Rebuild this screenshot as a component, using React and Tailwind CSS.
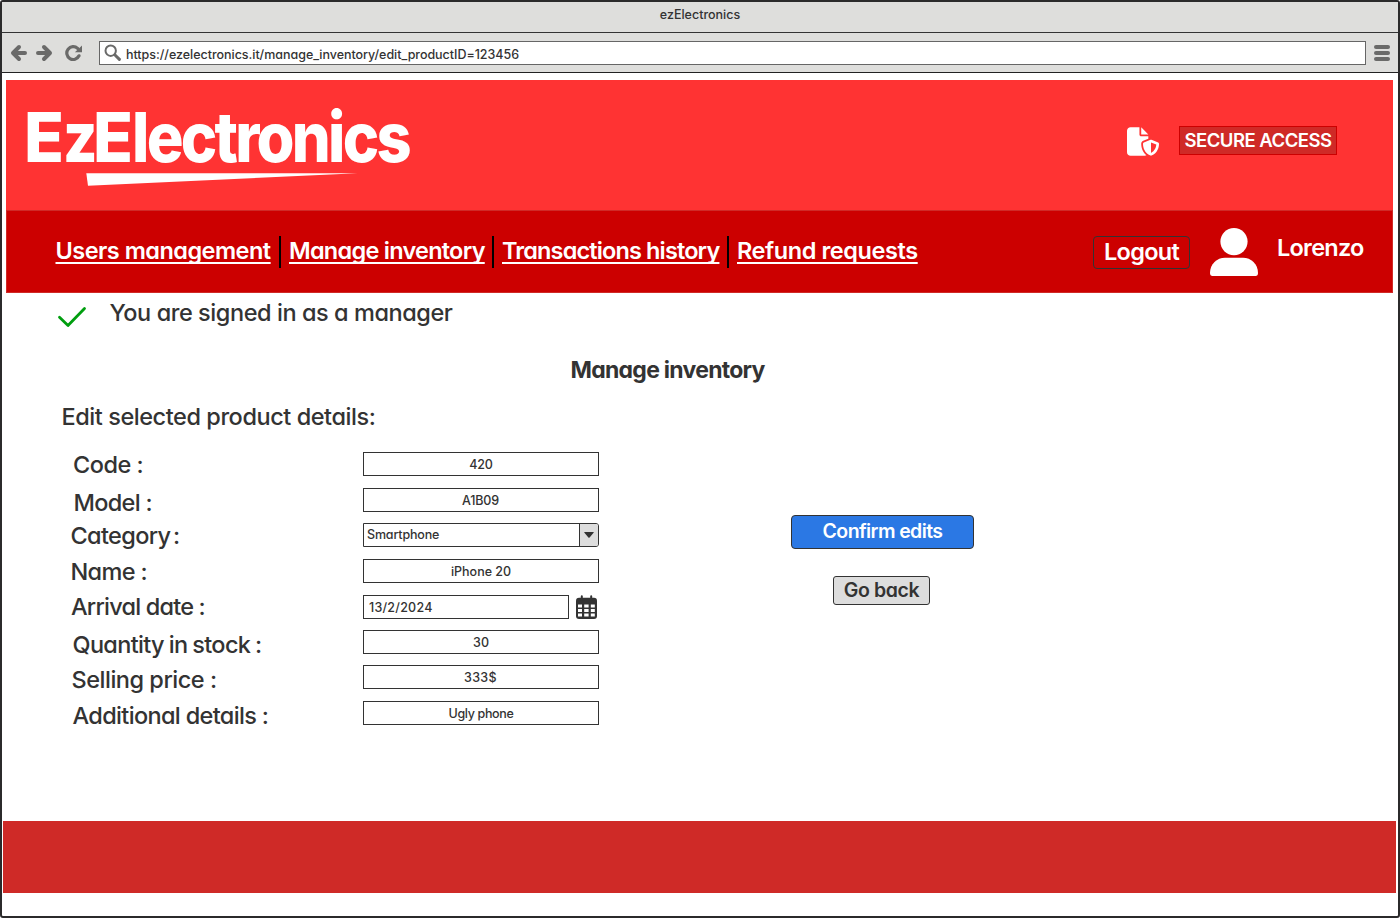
import { FaFileShield } from 'react-icons/fa6';

const INPUT = 'flex h-6 items-center justify-center border border-[#333333] bg-white pt-[2.5px] text-[12.5px] font-medium leading-none';

const navLinks = [
  { label: 'Users management', className: 'w-[215.5px] tracking-[-0.52px]' },
  { label: 'Manage inventory', className: 'w-[195px] tracking-[-0.74px]' },
  { label: 'Transactions history', className: 'w-[217px] tracking-[-0.86px]' },
  { label: 'Refund requests', className: 'w-[181px] tracking-[-0.42px]' },
];

function BrowserBar() {
  return (
    <div className="bg-[#dededc]">
      <div className="flex h-[31px] items-center justify-center border-b border-[#333333] pb-[4px] text-[12.5px] font-medium leading-none">
        ezElectronics
      </div>
      <div className="flex h-10 items-center border-b border-[#222222] pl-[7px] pr-[8px] pt-px">
        <svg className="h-[18px] w-[18px]" viewBox="0 0 18 18" fill="none" stroke="#6a6a69" strokeWidth="4" strokeLinecap="round" strokeLinejoin="round">
          <path d="M10 3 L4 9 L10 15 M4.7 9 H16" />
        </svg>
        <svg className="ml-[9px] h-[18px] w-[18px]" viewBox="0 0 18 18" fill="none" stroke="#6a6a69" strokeWidth="4" strokeLinecap="round" strokeLinejoin="round">
          <path d="M8 3 L14 9 L8 15 M13.3 9 H2" />
        </svg>
        <svg className="ml-[11px] h-[18px] w-[18px]" viewBox="0 0 18 18">
          <path d="M14 11.8 A6.4 6.4 0 1 1 12.6 4.4" fill="none" stroke="#6a6a69" strokeWidth="3.2" strokeLinecap="round" />
          <path d="M17 1.5 V8.3 H9.9 Z" fill="#6a6a69" />
        </svg>
        <div className="ml-4 flex h-6 flex-1 items-center border border-[#666666] bg-white pl-1">
          <svg className="h-[18px] w-[18px]" viewBox="0 0 18 18" fill="none" stroke="#6a6a69" strokeLinecap="round">
            <circle cx="6.7" cy="6.7" r="5.2" strokeWidth="2" />
            <path d="M11 11 L15.4 15.4" strokeWidth="3" />
          </svg>
          <span className="ml-1 pt-[4px] text-[12.5px] font-medium leading-none tracking-[-0.03px]">
            https://ezelectronics.it/manage_inventory/edit_productID=123456
          </span>
        </div>
        <div className="ml-2 flex w-4 flex-col gap-[2px]">
          <div className="h-1 rounded-full bg-[#6a6a69]" />
          <div className="h-1 rounded-full bg-[#6a6a69]" />
          <div className="h-1 rounded-full bg-[#6a6a69]" />
        </div>
      </div>
    </div>
  );
}

function Logo() {
  return (
    <div className="w-[400px] pl-[18px] pt-[21px] text-white">
      <div className="flex h-[72px] text-[69px] font-extrabold leading-[72px]">
        <span className="w-[38.5px] origin-left scale-x-[0.95] tracking-[-3px]">E</span>
        <span className="w-[30.5px] origin-left scale-x-[0.86] tracking-[-5px]">z</span>
        <span className="w-[38.5px] origin-left scale-x-[0.95] tracking-[-3px]">E</span>
        <span className="origin-left scale-x-[0.89] tracking-[-3.1px]">lectronics</span>
      </div>
      <svg className="ml-[61.5px] h-[13px] w-[273px]" viewBox="0 0 273 13">
        <path d="M0.3 0.3 L271.5 0.3 L2 12.7 Z" fill="#ffffff" />
      </svg>
    </div>
  );
}

function Header() {
  return (
    <header className="mx-1 mt-[7px] w-[1387px]">
      <div className="flex h-[130px] bg-[#ff3333]">
        <Logo />
        <div className="ml-auto mr-14 mt-[46px] flex h-[29px] items-center text-white">
          <FaFileShield className="mt-[2px] h-[29px] w-[32px]" />
          <button className="ml-5 flex h-[29px] w-[158px] items-center justify-center border border-[#cc0000] bg-[#cf2a27] text-[18.5px] font-semibold leading-none tracking-[-0.5px] whitespace-nowrap">
            SECURE ACCESS
          </button>
        </div>
      </div>
      <div className="flex h-[83px] border border-[#cf2a27] bg-[#cc0000] text-[23.5px] font-semibold leading-8 text-white">
        <nav className="mt-[23.5px] flex h-8 items-start pl-[48.5px]">
          {navLinks.map((link, i) => (
            <div key={link.label} className="flex">
              {i > 0 && <span className="ml-2 mr-2 mt-px h-8 w-[2px] bg-black" />}
              <a className={`block whitespace-nowrap underline decoration-[1.6px] underline-offset-[3px] [text-decoration-skip-ink:none] ${link.className}`}>
                {link.label}
              </a>
            </div>
          ))}
        </nav>
        <button className="ml-auto mt-[25px] flex h-[33px] w-[97px] items-center justify-center rounded-[4px] border border-[#333333] pb-[2px] tracking-[-0.7px]">
          Logout
        </button>
        <svg className="ml-5 mt-[17px] h-12 w-12" viewBox="0 0 48 48" fill="#ffffff">
          <circle cx="24" cy="13.6" r="13.6" />
          <path d="M0 45 C0 36 7 29.8 15 29.8 H33 C41 29.8 48 36 48 45 Q48 48 45.5 48 H2.5 Q0 48 0 45 Z" />
        </svg>
        <span className="ml-[19px] mr-[27px] mt-[21px] w-[88px] tracking-[-0.75px]">Lorenzo</span>
      </div>
    </header>
  );
}

function Labels() {
  return (
    <div className="w-[290px] pt-[2px] text-[23.5px] font-medium leading-8 whitespace-nowrap">
      <div className="pl-[2.5px] tracking-[-0.5px]">Code :</div>
      <div className="mt-1.5 pl-[3px] tracking-[-0.7px]">Model :</div>
      <div className="mt-px tracking-[-0.65px] [word-spacing:-3px]">Category :</div>
      <div className="mt-1 tracking-[-0.65px]">Name :</div>
      <div className="mt-[3px] pl-[0.5px] tracking-[-0.8px]">Arrival date :</div>
      <div className="mt-1.5 pl-[2px] tracking-[-0.68px] [word-spacing:-0.7px]">Quantity in stock :</div>
      <div className="mt-[3px] pl-px tracking-[-0.48px]">Selling price :</div>
      <div className="mt-1 pl-[2px] tracking-[-0.66px]">Additional details :</div>
    </div>
  );
}

function Fields() {
  return (
    <div className="mt-[5px] w-[236px]">
      <div className={`${INPUT} tracking-[-0.2px]`}>420</div>
      <div className={`${INPUT} mt-3 pr-px tracking-[-0.1px]`}>A1B09</div>
      <div className="mt-[11px] flex h-6 rounded-r-[3px] border border-[#333333] text-[12.5px] font-medium leading-[22px] tracking-[-0.16px]">
        <span className="flex-1 pl-[3px]">Smartphone</span>
        <span className="flex w-[19.5px] items-center justify-center rounded-r-[2px] border-l border-[#333333] bg-[#dddddd]">
          <svg className="h-[6px] w-[10px]" viewBox="0 0 10 6"><path d="M0.4 0 H9.6 Q10 0.4 9.4 1 L5.6 5.4 Q5 6 4.4 5.4 L0.6 1 Q0 0.4 0.4 0 Z" fill="#333333" /></svg>
        </span>
      </div>
      <div className={`${INPUT} mt-3`}>iPhone 20</div>
      <div className="mt-3 flex">
        <div className="flex h-6 w-[206px] items-center border border-[#333333] pl-[5px] pt-[2.5px] text-[12.5px] font-medium leading-none tracking-[0.24px]">13/2/2024</div>
        <svg className="ml-[6px] h-6 w-[23px]" viewBox="0 0 23 24">
          <path d="M4 2.8 H19 Q22 2.8 22 5.8 V21 Q22 24 19 24 H4 Q1 24 1 21 V5.8 Q1 2.8 4 2.8 Z" fill="#333333" />
          <path d="M6.8 1.2 V5 M16.2 1.2 V5" stroke="#333333" strokeWidth="2" strokeLinecap="round" />
          <g fill="#ffffff">
            <rect x="3" y="9.5" width="4" height="3" /><rect x="9.2" y="9.5" width="4.4" height="3" /><rect x="15.8" y="9.5" width="4" height="3" />
            <rect x="3" y="14" width="4" height="3" /><rect x="9.2" y="14" width="4.4" height="3" /><rect x="15.8" y="14" width="4" height="3" />
            <rect x="3" y="18.5" width="4" height="3" /><rect x="9.2" y="18.5" width="4.4" height="3" /><rect x="15.8" y="18.5" width="4" height="3" />
          </g>
        </svg>
      </div>
      <div className={`${INPUT} mt-[11px]`}>30</div>
      <div className={`${INPUT} mt-[11px] pr-px tracking-[0.3px]`}>333$</div>
      <div className={`${INPUT} mt-3 tracking-[-0.35px]`}>Ugly phone</div>
    </div>
  );
}

export default function App() {
  return (
    <div className="flex h-[918px] w-[1400px] flex-col rounded-[3px] border-2 border-[#2b2a2b] bg-white font-['Inter','Liberation_Sans',sans-serif] text-[#333333] [font-feature-settings:'cv11']">
      <BrowserBar />
      <Header />
      <main className="flex-1 text-[23.5px] font-medium leading-8">
        <div className="flex h-[43px] pl-[55px]">
          <svg className="mt-[13px] h-[22px] w-[30px]" viewBox="0 0 30 22" fill="none" stroke="#009e0f" strokeWidth="2.8" strokeLinecap="round" strokeLinejoin="round">
            <path d="M2.5 11.3 L11 19.4 L27.5 2.6" />
          </svg>
          <span className="ml-[22.5px] mt-1 tracking-[-0.44px]">You are signed in as a manager</span>
        </div>
        <h1 className="ml-[568.5px] mt-[18px] h-8 text-[23px] font-bold tracking-[-0.73px]">Manage inventory</h1>
        <h2 className="ml-[59.5px] mt-[15px] h-8 tracking-[-0.44px]">Edit selected product details:</h2>
        <div className="mt-[14px] flex gap-[2.5px] pl-[68.5px]">
          <Labels />
          <Fields />
          <div className="ml-[189.5px] mt-[68px] flex w-[183px] flex-col items-center">
            <button className="flex h-[34px] w-[183px] items-center justify-center rounded-[4px] border border-[#333333] bg-[#2b78e4] text-[19.5px] font-semibold leading-none tracking-[-0.6px] text-white">
              Confirm edits
            </button>
            <button className="mr-[2px] mt-[27px] flex h-[29px] w-[97px] items-center justify-center rounded-[3px] border border-[#333333] bg-[#dddddd] pt-px text-[19.5px] font-semibold leading-none tracking-[-0.42px]">
              Go back
            </button>
          </div>
        </div>
      </main>
      <footer className="ml-px mr-[2px] mb-[23px] h-[72px] bg-[#cf2a27]" />
    </div>
  );
}
